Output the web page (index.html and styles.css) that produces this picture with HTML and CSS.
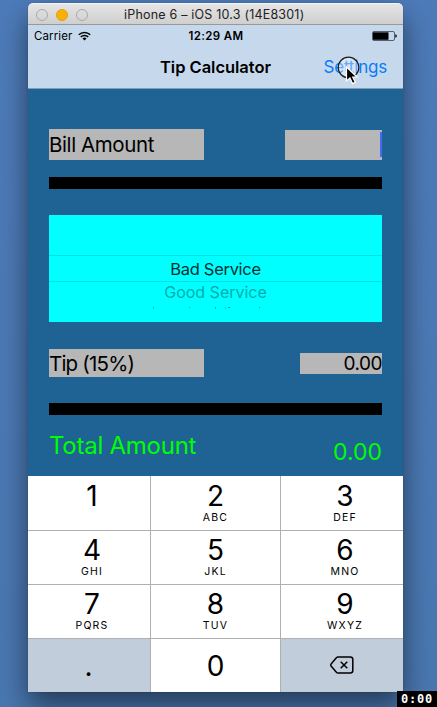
FILE: index.html
```
<!DOCTYPE html>
<html lang="en">
<head>
<meta charset="utf-8">
<title>Tip Calculator</title>
<link rel="stylesheet" href="styles.css">
</head>
<body>
<main class="window">
  <header class="titlebar">
    <div class="lights"><i></i><i class="amber"></i><i></i></div>
    <span class="window-title">iPhone 6 – iOS 10.3 (14E8301)</span>
  </header>
  <div class="status">
    <div class="carrier"><span>Carrier</span>
      <svg width="13" height="10" viewBox="0 0 13 10" fill="none" stroke="#000" stroke-width="1.5"><path d="M.8 3.7a8.2 8.2 0 0 1 11.4 0M2.8 5.9a5.3 5.3 0 0 1 7.4 0"/><path d="M4.5 7.5a3 3 0 0 1 4 0L6.500 9.500Z" fill="#000" stroke="none"/></svg>
    </div>
    <span class="clock">12:29 AM</span>
    <svg class="battery" width="25" height="10" viewBox="0 0 25 10"><rect x=".5" y=".5" width="22" height="9" rx="1.500" fill="none" stroke="#39424b" stroke-width=".8"/><rect x="1" y="1.300" width="15.500" height="7.500" fill="#000"/><path d="M23.300 3.200q1.500.3 1.500 1.800t-1.500 1.800Z"/></svg>
  </div>
  <nav class="nav">
    <h1>Tip Calculator</h1>
    <a class="settings">Settings</a>
    <svg class="pointer" width="24" height="30" viewBox="0 0 24 30"><circle cx="11.500" cy="11.500" r="10.300" fill="#fff" fill-opacity=".35" stroke="#1b1f24" stroke-width="1.200"/><path d="M9.500 11v14l3.400-3 2.700 5.600 2.700-1.300-2.600-5.300h4.300Z" fill="#000" stroke="#fff" stroke-width="1.200"/></svg>
  </nav>
  <section class="content">
    <div class="row bill"><span class="label">Bill Amount</span><div class="field"><i class="caret"></i></div></div>
    <div class="divider first"></div>
    <div class="picker">
      <div class="selected"><span>Bad Service</span></div>
      <div class="next"><span>Good Service</span></div>
      <svg class="edge" width="110" height="2" viewBox="0 0 110 2" fill="#00a5a5"><path d="M0 0h1v1.500h-1zM36 0h1v1h-1zM62 0h1v1.500h-1zM72 .5h1v1h-1zM75 0h2v1h-2zM106 0h1v1h-1z"/></svg>
    </div>
    <div class="row tip"><span class="label">Tip (15%)</span><span class="value">0.00</span></div>
    <div class="divider second"></div>
    <div class="row total"><span class="total-label">Total Amount</span><span class="total-value">0.00</span></div>
  </section>
  <section class="keypad">
    <div class="key left"><b>1</b></div>
    <div class="key"><b>2</b><small>ABC</small></div>
    <div class="key right"><b>3</b><small>DEF</small></div>
    <div class="key left"><b>4</b><small>GHI</small></div>
    <div class="key"><b>5</b><small>JKL</small></div>
    <div class="key right"><b>6</b><small>MNO</small></div>
    <div class="key left"><b>7</b><small>PQRS</small></div>
    <div class="key"><b>8</b><small>TUV</small></div>
    <div class="key right"><b>9</b><small>WXYZ</small></div>
    <div class="key bottom gray"><b>.</b></div>
    <div class="key bottom"><b>0</b></div>
    <div class="key bottom gray"><svg class="delete" width="24" height="18" viewBox="0 0 24 18" fill="none" stroke="#000" stroke-width="1.500" stroke-linejoin="round"><path d="M8 .9h12.300a2.500 2.500 0 0 1 2.500 2.500v11.200a2.500 2.500 0 0 1-2.500 2.500H8a2 2 0 0 1-1.400-.6L1.300 10.300a1.800 1.800 0 0 1 0-2.600L6.600 1.500A2 2 0 0 1 8 .9ZM10.700 5.700l6.600 6.600M17.300 5.700l-6.600 6.600"/></svg></div>
  </section>
</main>
<div class="timer">0:00</div>
</body>
</html>
```
FILE: styles.css
```
* { box-sizing: border-box; }
body {
  margin: 0;
  width: 437px;
  height: 707px;
  padding: 3px 0 0 28px;
  overflow: hidden;
  position: relative;
  background: linear-gradient(#4d7bb9, #4977b0);
  font-family: Inter, "Liberation Sans", sans-serif;
  color: #000;
}
.window {
  width: 375px;
  height: 689px;
  border-radius: 5px 5px 0 0;
  box-shadow: 0 0 1px rgba(0,0,0,.5), 0 14px 28px rgba(0,0,0,.5);
}
.titlebar {
  height: 22px;
  display: grid;
  grid-template-columns: 96px 1fr;
  align-items: center;
  border-radius: 5px 5px 0 0;
  border-top: 1px solid #f4f4f4;
  border-bottom: 1px solid #999;
  background: linear-gradient(#e5e5e5, #cfcfcf);
}
.lights { display: flex; gap: 8px; padding-left: 8px; }
.lights i { width: 12px; height: 12px; border: 1px solid #a9a9a9; border-radius: 50%; }
.lights .amber { background: #f8b104; border-color: #e3a00c; }
.window-title { padding-top: 1px; font-size: 12.5px; line-height: 20px; letter-spacing: .2px; color: #222; white-space: nowrap; }
.status {
  height: 20px;
  display: grid;
  grid-template-columns: 1fr 54px 1fr;
  align-items: center;
  padding: 0 6px;
  background: #c6d9ec;
  font-size: 11.5px;
  line-height: 20px;
}
.carrier { display: flex; align-items: center; gap: 6px; letter-spacing: .1px; }
.clock { font-weight: 600; letter-spacing: .35px; padding-top: 1px; white-space: nowrap; }
.battery { justify-self: end; }
.nav {
  position: relative;
  height: 44px;
  display: grid;
  grid-template-columns: 1fr 111px 1fr;
  align-items: center;
  padding: 0 16px;
  background: #c6d9ec;
  border-bottom: 1px solid #7f9db8;
}
.nav h1 { grid-column: 2; margin: 0; font-size: 16.500px; font-weight: 600; line-height: 42px; letter-spacing: -.03px; white-space: nowrap; }
.settings { justify-self: end; font-size: 17px; line-height: 42px; letter-spacing: -.2px; color: #087cfb; }
.pointer { position: absolute; left: 309px; top: 11px; }
.content { height: 387px; padding: 40px 21px 0; background: #1f6294; }
.row { display: flex; justify-content: space-between; }
.label { width: 155px; background: #b7b7b7; font-size: 20.500px; letter-spacing: -.4px; }
.bill .label { height: 31px; line-height: 31px; }
.field { display: flex; justify-content: flex-end; width: 97px; height: 30px; margin-top: 1px; padding-top: 2px; background: #b7b7b7; }
.caret { width: 2px; height: 25px; background: #426bf2; }
.divider { height: 12px; background: #000; }
.first { margin-top: 17px; }
.picker { height: 107px; margin-top: 26px; padding-top: 40px; background: #0ff; text-align: center; }
.selected { height: 27px; border-top: 1px solid #00e2e2; border-bottom: 1px solid #00e2e2; font-size: 16.500px; line-height: 26px; letter-spacing: -.3px; color: #052f2f; }
.next { height: 25px; font-size: 16px; line-height: 21px; color: #00adad; }
.edge { display: block; margin-left: 104px; }
.tip { margin-top: 27px; }
.tip .label { height: 28px; line-height: 29px; letter-spacing: -.8px; }
.value { width: 82px; height: 21px; margin-top: 4px; background: #b7b7b7; font-size: 19px; line-height: 22px; letter-spacing: -.5px; text-align: right; }
.second { margin-top: 26px; }
.total { color: #0f0; font-size: 24px; line-height: 30px; padding-top: 16px; letter-spacing: -.25px; }
.total-value { margin-top: 6px; font-size: 23px; letter-spacing: 0; }
.keypad { display: grid; grid-template-columns: 123px 130px 122px; grid-template-rows: 55px 54px 54px 53px; background: #fff; }
.key { display: flex; flex-direction: column; align-items: center; padding-top: 7px; border-right: 1px solid #b0b0b0; border-bottom: 1px solid #b0b0b0; }
.key:nth-child(3n) { border-right: 0; }
.key:nth-child(n+4) { padding-top: 6px; }
.left { padding-left: 6px; }
.right { padding-left: 6px; }
.key b { font-size: 28px; font-weight: 400; line-height: 26px; }
.key small { margin-top: 2px; font-size: 10.500px; line-height: 13px; letter-spacing: 1.200px; }
.key.bottom { justify-content: center; padding: 0; border-bottom: 0; }
.key.gray { padding-right: 1px; }
.key .delete { margin-bottom: 1px; }
.gray { background: #c2cddb; }
.timer { position: absolute; right: 0; bottom: 0; width: 40px; height: 16px; background: #000; color: #fff; font: bold 12px/16px "DejaVu Sans Mono", monospace; text-align: center; letter-spacing: .8px; }
```
